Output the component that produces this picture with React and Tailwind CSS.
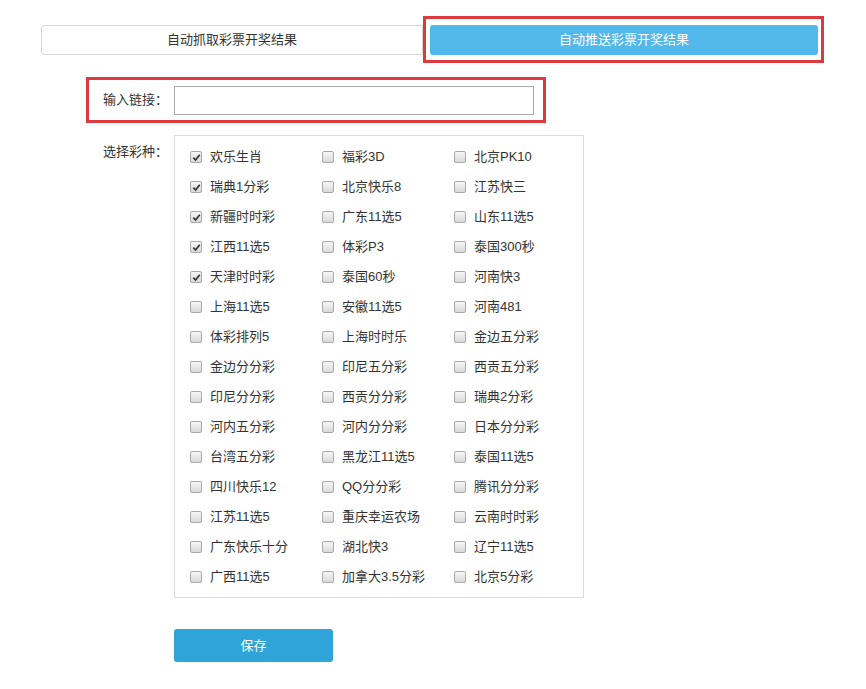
import React from "react";

const rows = [
  ["欢乐生肖", true, "福彩3D", "北京PK10"],
  ["瑞典1分彩", true, "北京快乐8", "江苏快三"],
  ["新疆时时彩", true, "广东11选5", "山东11选5"],
  ["江西11选5", true, "体彩P3", "泰国300秒"],
  ["天津时时彩", true, "泰国60秒", "河南快3"],
  ["上海11选5", false, "安徽11选5", "河南481"],
  ["体彩排列5", false, "上海时时乐", "金边五分彩"],
  ["金边分分彩", false, "印尼五分彩", "西贡五分彩"],
  ["印尼分分彩", false, "西贡分分彩", "瑞典2分彩"],
  ["河内五分彩", false, "河内分分彩", "日本分分彩"],
  ["台湾五分彩", false, "黑龙江11选5", "泰国11选5"],
  ["四川快乐12", false, "QQ分分彩", "腾讯分分彩"],
  ["江苏11选5", false, "重庆幸运农场", "云南时时彩"],
  ["广东快乐十分", false, "湖北快3", "辽宁11选5"],
  ["广西11选5", false, "加拿大3.5分彩", "北京5分彩"],
];

function Box({ checked }) {
  return (
    <span className="relative inline-flex h-[12px] w-[12px] shrink-0 items-center justify-center rounded-[2px] border border-[#a9a9a9] bg-gradient-to-b from-[#f6f6f6] to-[#d9d9d9]">
      {checked && (
        <svg width="9" height="9" viewBox="0 0 10 10" className="block">
          <path d="M1.5 5.2 L4 7.8 L8.6 2" fill="none" stroke="#333" strokeWidth="1.9" />
        </svg>
      )}
    </span>
  );
}

function Item({ label, checked }) {
  return (
    <div className="flex h-[30px] items-center">
      <Box checked={checked} />
      <span className="ml-[8px] text-[13px] text-[#333]">{label}</span>
    </div>
  );
}

export default function App() {
  return (
    <div
      className="min-h-[689px] w-[866px] bg-white pt-[16px]"
      style={{ fontFamily: '"Liberation Sans", "Noto Sans CJK SC", sans-serif' }}
    >
      <div className="ml-[41px] flex items-center">
        <div className="flex h-[30px] w-[382px] items-center justify-center rounded-l-[3px] border border-[#d6d6d6] text-[13px] text-[#333]">
          自动抓取彩票开奖结果
        </div>
        <div className="box-border h-[47px] w-[401px] border-[3px] border-[#dc3a3f] pb-[5px] pl-[4px] pr-[3px] pt-[6px]">
          <div className="flex h-full w-full items-center justify-center rounded-[3px] bg-[#52b7ea] text-[13px] text-white">
            自动推送彩票开奖结果
          </div>
        </div>
      </div>

      <div className="ml-[86px] mt-[14px] box-border flex h-[46px] w-[460px] items-center border-[3px] border-[#dc3a3f] pl-[14px]">
        <span className="w-[71px] text-[13px] text-[#333]">输入链接：</span>
        <input className="h-[29px] w-[360px] border border-[#a9a9a9] bg-white outline-none" />
      </div>

      <div className="mt-[12px] flex">
        <span className="ml-[103px] mt-[7px] w-[71px] text-[13px] text-[#333]">选择彩种：</span>
        <div className="box-border w-[410px] border border-[#dcdcdc] pb-[5px] pl-[15px] pt-[6px]">
          {rows.map(([a, ca, b, c]) => (
            <div key={a} className="grid grid-cols-[132px_132px_132px]">
              <Item label={a} checked={ca} />
              <Item label={b} checked={false} />
              <Item label={c} checked={false} />
            </div>
          ))}
        </div>
      </div>

      <button className="ml-[174px] mt-[31px] flex h-[33px] w-[159px] items-center justify-center rounded-[3px] bg-[#2ea4d9] text-[13px] text-white">
        保存
      </button>
    </div>
  );
}
